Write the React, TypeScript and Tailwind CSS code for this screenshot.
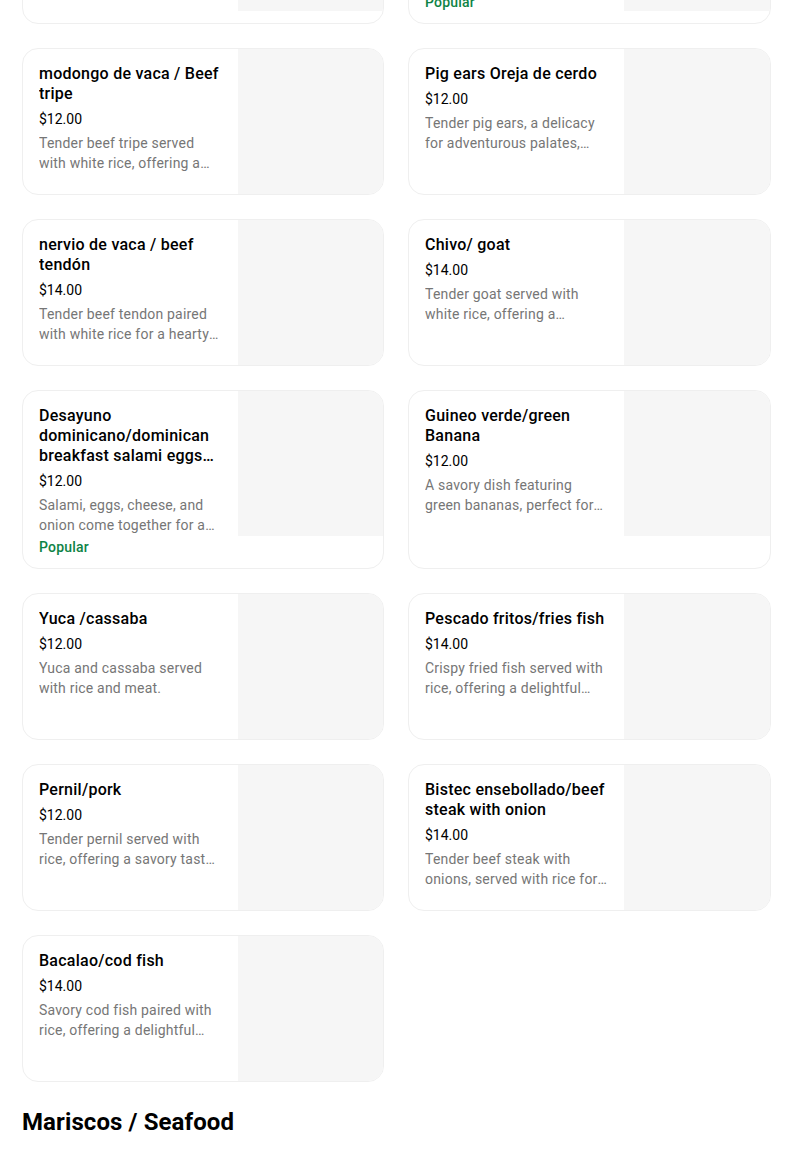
import React from 'react';

type Item = {
  name: string;
  price: string;
  desc?: string;
  popular?: boolean;
};

const rows: (Item | null)[][] = [
  [
    { name: 'Mangú con tres golpes / mashed plantain', price: '$12.00', desc: 'Mashed plantains served with salami, eggs and cheese.' },
    { name: 'Sancocho dominicano / dominican stew', price: '$14.00', desc: 'A hearty traditional stew with meats and root vegetables.', popular: true }
  ],
  [
    { name: 'modongo de vaca / Beef tripe', price: '$12.00', desc: 'Tender beef tripe served with white rice, offering a comforting taste.' },
    { name: 'Pig ears Oreja de cerdo', price: '$12.00', desc: 'Tender pig ears, a delicacy for adventurous palates, served with rice.' }
  ],
  [
    { name: 'nervio de vaca / beef tendón', price: '$14.00', desc: 'Tender beef tendon paired with white rice for a hearty meal.' },
    { name: 'Chivo/ goat', price: '$14.00', desc: 'Tender goat served with white rice, offering a flavorful experience.' }
  ],
  [
    { name: 'Desayuno dominicano/dominican breakfast salami eggs cheese onion', price: '$12.00', desc: 'Salami, eggs, cheese, and onion come together for a classic breakfast.', popular: true },
    { name: 'Guineo verde/green Banana', price: '$12.00', desc: 'A savory dish featuring green bananas, perfect for any meal.' }
  ],
  [
    { name: 'Yuca /cassaba', price: '$12.00', desc: 'Yuca and cassaba served with rice and meat.' },
    { name: 'Pescado fritos/fries fish', price: '$14.00', desc: 'Crispy fried fish served with rice, offering a delightful crunch.' }
  ],
  [
    { name: 'Pernil/pork', price: '$12.00', desc: 'Tender pernil served with rice, offering a savory taste of home.' },
    { name: 'Bistec ensebollado/beef steak with onion', price: '$14.00', desc: 'Tender beef steak with onions, served with rice for a full meal.' }
  ],
  [
    { name: 'Bacalao/cod fish', price: '$14.00', desc: 'Savory cod fish paired with rice, offering a delightful taste.' },
    null
  ]
];

function Card({ item }: { item: Item }) {
  return (
    <div className="flex overflow-hidden rounded-2xl border border-[#efefef] bg-white">
      <div className="flex w-[215px] shrink-0 flex-col px-4 pt-[15px] pb-[11px]">
        <div className="line-clamp-3 text-[16px] leading-5 font-medium tracking-[0.25px] text-black">
          {item.name}
        </div>
        <div className="mt-[5px] text-[14px] leading-5 text-black">
          {item.price}
        </div>
        {item.desc && (
          <div className="mt-1 line-clamp-2 text-[14px] leading-5 tracking-[0.2px] text-[#767676]">
            {item.desc}
          </div>
        )}
        {item.popular && (
          <div className="mt-[2px] text-[14px] leading-5 font-medium tracking-[0.2px] text-[#0e8345]">
            Popular
          </div>
        )}
      </div>
      <div className="h-[145px] flex-1 bg-[#f6f6f6]" />
    </div>
  );
}

export default function App() {
  return (
    <div
      className="h-[1153px] overflow-hidden bg-white pl-[22px]"
      style={{ fontFamily: 'Roboto, "Noto Sans", sans-serif' }}
    >
      <div className="mt-[-135px] flex flex-col gap-6">
        {rows.map((row, i) => (
          <div key={i} className="grid grid-cols-[362px_363px] gap-6">
            {row.map((item, j) =>
              item ? <Card key={j} item={item} /> : <div key={j} />
            )}
          </div>
        ))}
      </div>

      <h2 className="mt-6 text-[24px] leading-8 font-bold tracking-[0.1px] text-black">
        Mariscos / Seafood
      </h2>

      <div className="mt-4 grid grid-cols-[362px_363px] gap-6">
        <Card item={{ name: 'Camarones / shrimp', price: '$16.00', desc: 'Shrimp served with rice.' }} />
        <Card item={{ name: 'Pulpo / octopus', price: '$18.00', desc: 'Octopus served with rice.' }} />
      </div>
    </div>
  );
}
